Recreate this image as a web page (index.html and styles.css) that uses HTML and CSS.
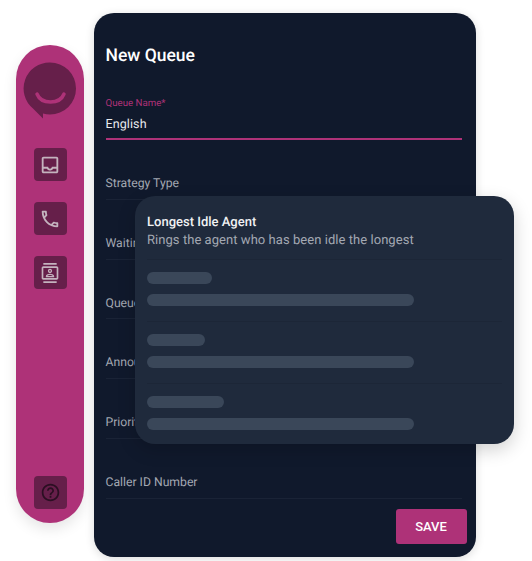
FILE: index.html
```html
<!DOCTYPE html>
<html lang="en">
<head>
<meta charset="utf-8">
<title>New Queue</title>
<link rel="stylesheet" href="styles.css">
</head>
<body>
<div class="stage">
  <aside class="rail">
    <svg class="logo" width="54" height="58" viewBox="0 0 54 58">
      <path class="logo-bubble" d="M27 0.5a26 26 0 0 1 0 52 26 26 0 0 1-7-1v5l-10-10A26 26 0 0 1 27 0.5z"/>
      <path class="logo-smile" d="M14 32c2 5 7 8 13.5 8s11.500-3 13.500-8" />
    </svg>
    <nav class="rail-nav">
      <a class="rail-btn">
        <svg width="22" height="22" viewBox="0 0 24 24" class="ico"><path d="M19 3H5c-1.100 0-2 .9-2 2v14c0 1.100.89 2 2 2h14c1.100 0 2-.9 2-2V5c0-1.100-.9-2-2-2zm0 16H5v-3h3.560c.69 1.190 1.970 2 3.450 2s2.750-.81 3.450-2H19v3zm0-5h-4.990c0 1.100-.9 2-2 2s-2-.9-2-2H5V5h14v9z"/></svg>
      </a>
      <a class="rail-btn">
        <svg width="22" height="22" viewBox="0 0 24 24" class="ico"><path d="M6.540 5c.06.89.21 1.760.45 2.590l-1.200 1.200c-.41-1.200-.67-2.470-.76-3.790h1.510m9.860 12.020c.85.24 1.720.39 2.600.45v1.490c-1.320-.09-2.590-.35-3.800-.75l1.200-1.190M7.500 3H4c-.55 0-1 .45-1 1 0 9.390 7.610 17 17 17 .55 0 1-.45 1-1v-3.490c0-.55-.45-1-1-1-1.240 0-2.450-.2-3.570-.57-.1-.04-.21-.05-.31-.05-.26 0-.51.1-.71.29l-2.200 2.200c-2.830-1.450-5.150-3.760-6.590-6.590l2.200-2.200c.28-.28.36-.67.25-1.020C8.700 6.450 8.500 5.250 8.500 4c0-.55-.45-1-1-1z"/></svg>
      </a>
      <a class="rail-btn">
        <svg width="20" height="20" viewBox="0 0 24 24" class="ico"><path d="M20 0H4v2h16V0zM4 24h16v-2H4v2zM20 4H4c-1.100 0-2 .9-2 2v12c0 1.100.9 2 2 2h16c1.100 0 2-.9 2-2V6c0-1.100-.9-2-2-2zm0 14H4V6h16v12zM12 12c1.380 0 2.500-1.120 2.500-2.500S13.380 7 12 7 9.500 8.120 9.500 9.500 10.620 12 12 12zm0-3.500c.55 0 1 .45 1 1s-.45 1-1 1-1-.45-1-1 .45-1 1-1zm5 7.490c0-2.090-3.310-2.990-5-2.990s-5 .9-5 2.990V17h10v-1.010zm-8.190-.49c.61-.52 2.030-1 3.190-1 1.170 0 2.590.48 3.200 1H8.810z"/></svg>
      </a>
    </nav>
    <a class="rail-btn rail-help">
      <svg width="21" height="21" viewBox="0 0 24 24" class="ico-help"><path d="M11 18h2v-2h-2v2zm1-16C6.480 2 2 6.480 2 12s4.480 10 10 10 10-4.480 10-10S17.520 2 12 2zm0 18c-4.410 0-8-3.590-8-8s3.590-8 8-8 8 3.590 8 8-3.590 8-8 8zm0-14c-2.210 0-4 1.790-4 4h2c0-1.100.9-2 2-2s2 .9 2 2c0 2-3 1.750-3 5h2c0-2.250 3-2.500 3-5 0-2.210-1.790-4-4-4z"/></svg>
    </a>
  </aside>

  <main class="panel">
    <h1 class="title">New Queue</h1>
    <div class="name-field">
      <label class="name-label">Queue Name*</label>
      <div class="name-value">English</div>
    </div>
    <div class="field">Strategy Type</div>
    <div class="field">Waiting Time</div>
    <div class="field">Queue Size</div>
    <div class="field">Announcement</div>
    <div class="field">Priority</div>
    <div class="field">Caller ID Number</div>
    <div class="actions"><button class="save">SAVE</button></div>
  </main>

  <section class="popover">
    <div class="option">
      <div class="option-title">Longest Idle Agent</div>
      <div class="option-desc">Rings the agent who has been idle the longest</div>
    </div>
    <div class="skeleton"><span class="bar short s1"></span><span class="bar long"></span></div>
    <div class="skeleton"><span class="bar short s2"></span><span class="bar long"></span></div>
    <div class="skeleton"><span class="bar short s3"></span><span class="bar long"></span></div>
  </section>
</div>
</body>
</html>
```
FILE: styles.css
```css
* { box-sizing: border-box; }
html, body { margin: 0; padding: 0; background: #fff; }
body { font-family: Roboto, "Liberation Sans", sans-serif; width: 532px; height: 561px; overflow: hidden; text-rendering: geometricPrecision; }

.stage { position: relative; display: flex; align-items: flex-start; gap: 10px; width: 532px; height: 561px; padding: 13px 0 0 16px; }

.rail {
  width: 68px; height: 478px; margin-top: 32px;
  background: #ae3278; border-radius: 34px;
  display: flex; flex-direction: column; align-items: center;
  padding: 17px 0 14px;
  box-shadow: 0 6px 14px rgba(0,0,0,.1);
}
.logo { display: block; margin-left: -1px; }
.logo-bubble { fill: #661f4a; }
.logo-smile { fill: none; stroke: #ae3278; stroke-width: 3.5; stroke-linecap: round; }
.rail-nav { display: flex; flex-direction: column; gap: 21px; margin-top: 28px; }
.rail-btn { width: 33px; height: 33px; border-radius: 4px; background: #661f4a; display: flex; align-items: center; justify-content: center; }
.rail-help { margin-top: auto; }
.ico { fill: #c4b3be; }
.ico-help { fill: #2b0f22; }

.panel {
  width: 382px; height: 544px;
  background: #10192c; border-radius: 20px;
  padding: 33px 15px 0 11.5px;
  display: flex; flex-direction: column;
  box-shadow: 0 2px 10px rgba(0,0,0,.14);
}
.title { margin: 0; font-size: 17.5px; line-height: 21px; font-weight: 500; color: #fff; }
.name-field { margin-top: 31px; height: 42px; width: 356px; border-bottom: 2px solid #ae3278; }
.name-label { display: block; font-size: 9.7px; line-height: 12px; color: #ae3278; }
.name-value { margin-top: 6px; font-size: 12.5px; line-height: 17px; color: #e8eaee; letter-spacing: .1px; }
.field {
  width: 356px; height: 59.8px; padding-top: 35px;
  font-size: 12.2px; line-height: 17px; color: #a3a8b2;
  border-bottom: 1px solid #1a2336;
}
.actions { display: flex; justify-content: flex-end; margin-top: 10px; margin-right: -5px; width: 361px; }
.save {
  width: 71px; height: 35px; border: 0; border-radius: 3px;
  background: #ae3278; color: #fff;
  font: 500 13px/35px Roboto, "Liberation Sans", sans-serif;
  padding: 0;
}

.popover {
  position: absolute; left: 135px; top: 196px;
  width: 379px; height: 248px;
  background: #1f2a3c; border-radius: 20px;
  padding: 0 12px;
  box-shadow: 0 6px 18px rgba(0,0,0,.18);
}
.option { height: 64px; padding-top: 17.500px; border-bottom: 1px solid #1c2637; }
.option-title { font-size: 13px; line-height: 17px; font-weight: 500; color: #f0f1f3; }
.option-desc { font-size: 13px; line-height: 19px; color: #a3a8b2; letter-spacing: .05px; }
.skeleton { height: 62px; padding-top: 12px; border-bottom: 1px solid #1c2637; display: flex; flex-direction: column; gap: 10px; }
.skeleton:last-child { border-bottom: 0; }
.bar { display: block; height: 12px; border-radius: 6px; background: #3a4759; }
.s1 { width: 65px; }
.s2 { width: 58px; }
.s3 { width: 77px; }
.long { width: 267px; }
```
